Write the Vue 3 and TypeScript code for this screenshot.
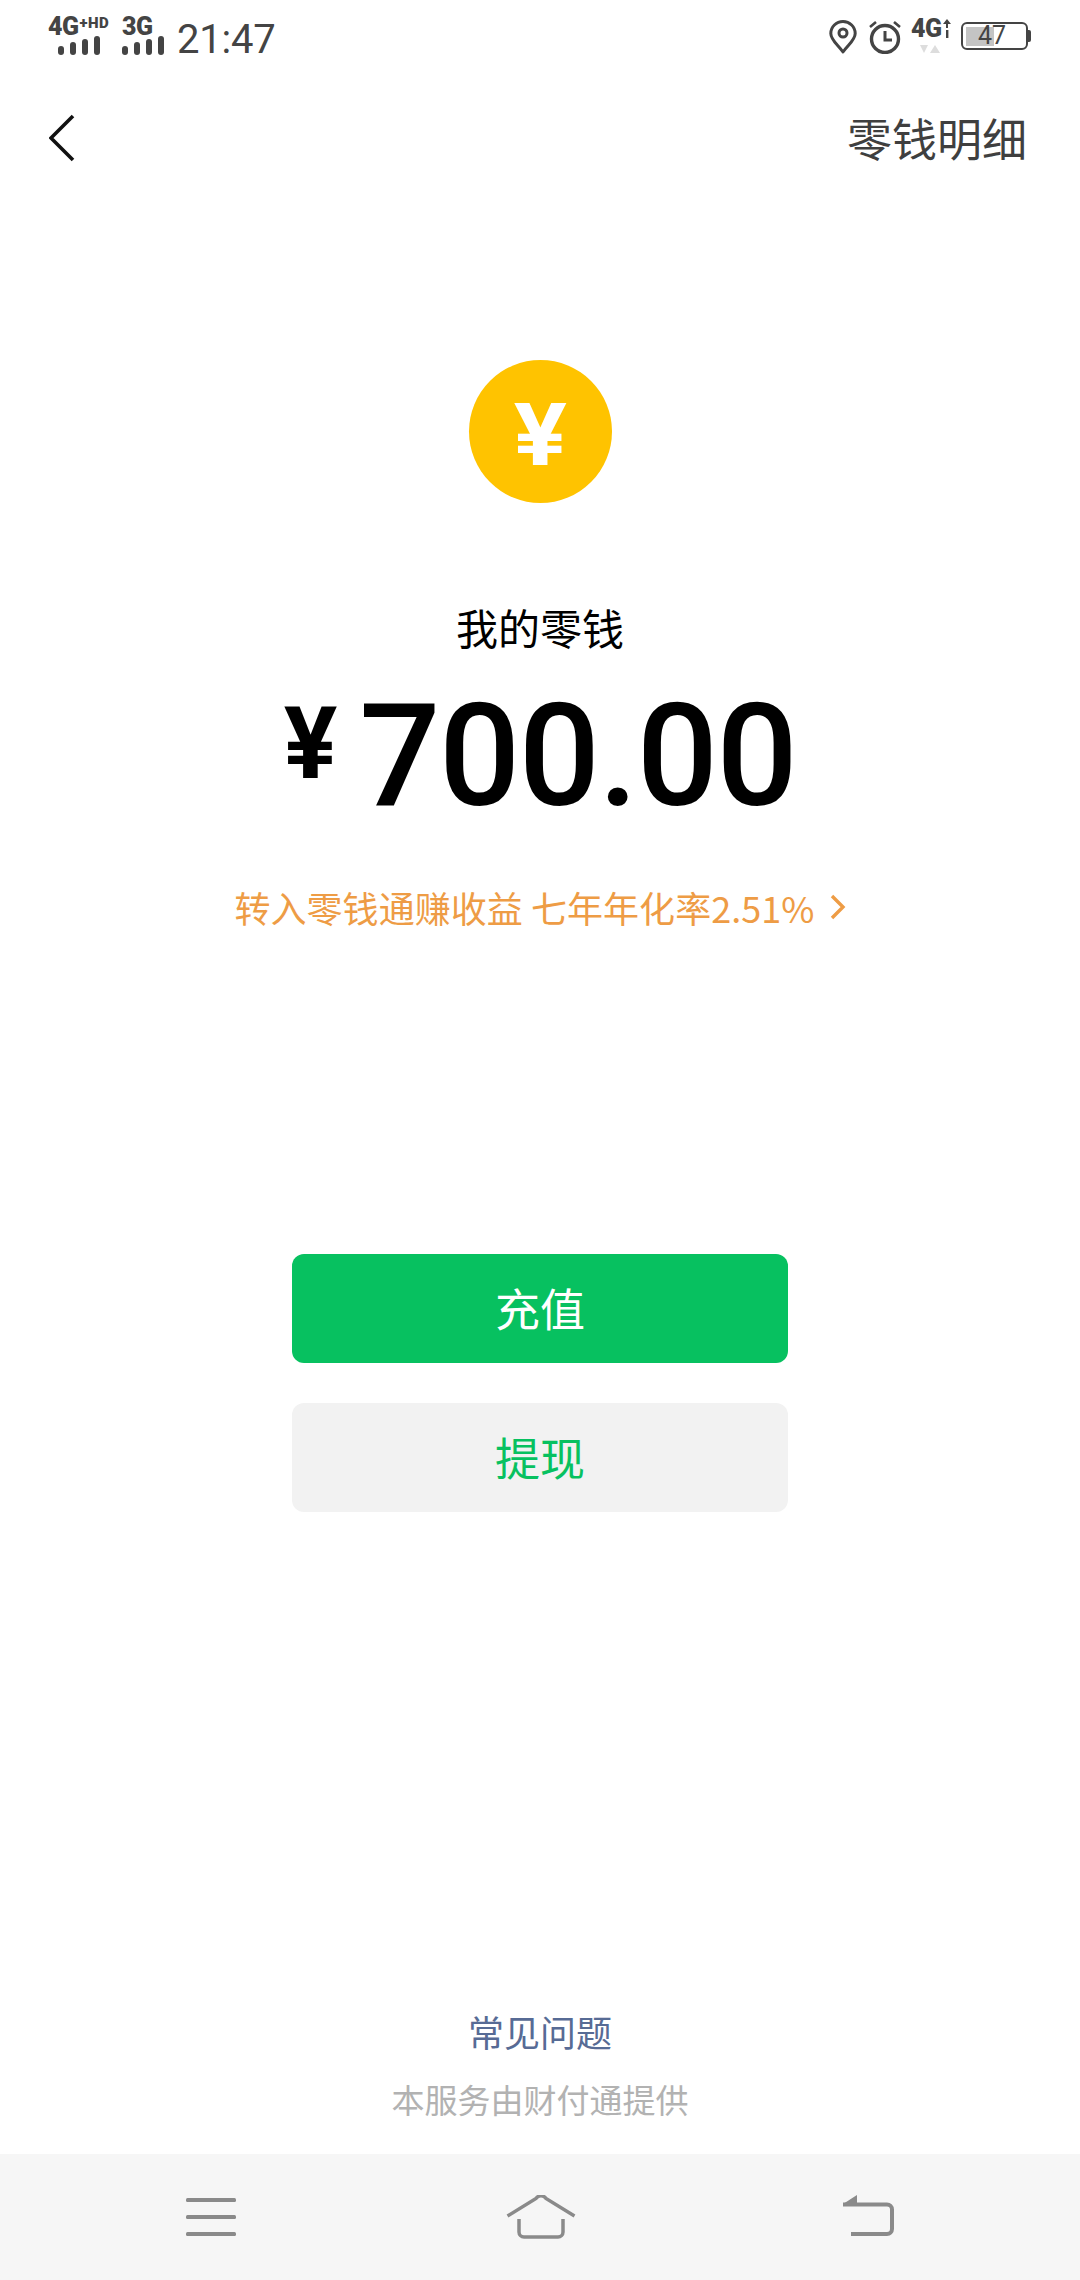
<script setup lang="ts">
const bars = [9, 13, 16, 19]
</script>

<template>
  <div class="page">
    <div class="status">
      <div class="net net-a">
        <div class="net-label"><span class="big">4G</span><span class="sup">+HD</span></div>
        <div class="bars"><i v-for="h in bars" :key="h" :style="{ height: h + 'px' }"></i></div>
      </div>
      <div class="net net-b">
        <div class="net-label"><span class="big">3G</span></div>
        <div class="bars"><i v-for="h in bars" :key="h" :style="{ height: h + 'px' }"></i></div>
      </div>
      <span class="clock">21:47</span>
      <div class="status-right">
        <svg class="pin" width="28" height="34" viewBox="0 0 28 34" fill="none" stroke="#444" stroke-width="3">
          <path d="M14 32 C9 25 1.8 20 1.8 13.5 A12.2 12 0 0 1 26.2 13.5 C26.2 20 19 25 14 32Z" stroke-linejoin="round" />
          <circle cx="14" cy="13" r="4" />
        </svg>
        <svg class="alarm" width="34" height="34" viewBox="0 0 34 34" fill="none" stroke="#444" stroke-width="3.4">
          <circle cx="17" cy="19" r="13.5" />
          <path d="M17 11v9h7" stroke-width="3" />
          <path d="M2 7l6-5M32 7l-6-5" stroke-width="2.6" />
        </svg>
        <div class="net4">
          <div class="net4-label"><span>4G</span>
            <svg width="8" height="19" viewBox="0 0 8 19"><path d="M4 0l4 5H5v4H3V5H0z" fill="#444"/><rect x="3" y="11" width="2.4" height="8" fill="#444"/></svg>
          </div>
          <svg class="updown" width="22" height="10" viewBox="0 0 22 10"><path d="M0 1h8l-4 8zM10 9h10l-5-8z" fill="#ddd"/></svg>
        </div>
        <div class="battery">
          <div class="cell">
            <div class="fill"></div>
            <span class="pct">47</span>
          </div>
          <div class="nub"></div>
        </div>
      </div>
    </div>

    <div class="header">
      <svg width="26" height="48" viewBox="0 0 26 48" fill="none" stroke="#111" stroke-width="3.6">
        <path d="M24 2L2 24l22 22" />
      </svg>
      <span class="detail">零钱明细</span>
    </div>

    <div class="coin"><span class="coin-yen">¥</span></div>
    <div class="caption">我的零钱</div>
    <div class="amount"><span class="yen">¥</span><span class="num">700.00</span></div>
    <div class="promo">
      <span>转入零钱通赚收益 七年年化率2.51%</span>
      <svg width="16" height="26" viewBox="0 0 16 26" fill="none" stroke="#EE9C45" stroke-width="3.4">
        <path d="M2 2l11 11L2 24" />
      </svg>
    </div>

    <div class="btn primary">充值</div>
    <div class="btn secondary">提现</div>

    <div class="faq">常见问题</div>
    <div class="provider">本服务由财付通提供</div>

    <div class="navbar">
      <svg width="50" height="38" viewBox="0 0 50 38" fill="#8a8a8a">
        <rect x="0" y="0" width="50" height="4" rx="1.5" />
        <rect x="0" y="17" width="50" height="4" rx="1.5" />
        <rect x="0" y="34" width="50" height="4" rx="1.5" />
      </svg>
      <svg class="home" width="70" height="44" viewBox="0 0 70 44" fill="none" stroke="#8a8a8a" stroke-width="3.4">
        <path d="M1.500 21L30 3.500a6 6 0 0 1 10 0L68.500 21" />
        <path d="M13 24v13a5 5 0 0 0 5 5h34a5 5 0 0 0 5-5V24" stroke-width="3.500" />
      </svg>
      <svg class="back" width="52" height="42" viewBox="0 0 52 42" fill="none" stroke="#8a8a8a" stroke-width="4">
        <path d="M1 9L15 0v8z" fill="#8a8a8a" stroke="none" />
        <path d="M1 9.500h44a5 5 0 0 1 5 5V34a5 5 0 0 1-5 5H9" />
      </svg>
    </div>
  </div>
</template>

<style scoped>
.page {
  width: 1080px;
  height: 2280px;
  background: #fff;
  display: flex;
  flex-direction: column;
  align-items: center;
  font-family: "Noto Sans CJK SC", Roboto, sans-serif;
  overflow: hidden;
}
.status {
  align-self: stretch;
  height: 72px;
  display: flex;
  align-items: flex-start;
  padding: 17px 48px 0 48px;
  box-sizing: border-box;
  color: #444;
  font-family: Roboto, sans-serif;
}
.net { display: flex; flex-direction: column; }
.net-a { width: 62px; }
.net-b { margin-left: 12px; width: 42px; }
.net-label { height: 19px; display: flex; align-items: flex-start; line-height: 19px; white-space: nowrap; }
.big { font-size: 25px; font-weight: 900; letter-spacing: -0.5px; }
.sup { font-size: 15px; font-weight: 900; line-height: 12px; margin-left: 1px; letter-spacing: 0.4px; }
.bars { display: flex; align-items: flex-end; gap: 6px; height: 19px; justify-content: flex-end; }
.net-a .bars { padding-right: 10px; }
.bars i { display: block; width: 6px; border-radius: 3px; background: #444; height: 100%; }
.clock { margin-left: 13px; font-size: 40px; line-height: 44px; margin-top: 1px; letter-spacing: -0.2px; }
.status-right { margin-left: auto; display: flex; align-items: flex-start; padding-top: 3px; }
.alarm { margin-left: 11px; }
.net4 { margin-left: 9px; width: 42px; display: flex; flex-direction: column; align-items: center; margin-top: -1px; }
.net4-label { display: flex; font-size: 25px; font-weight: 900; line-height: 19px; height: 19px; align-self: flex-start; letter-spacing: -0.5px; }
.net4-label svg { margin-left: 1px; }
.updown { margin-top: 6px; margin-right: 2px; }
.battery { margin-left: 8px; margin-right: 1px; display: flex; align-items: center; margin-top: 2px; }
.cell {
  width: 67px;
  height: 28px;
  box-sizing: border-box;
  border: 2.5px solid #444;
  border-radius: 6px;
  position: relative;
  padding: 2.5px;
}
.fill { width: 28px; height: 100%; background: #c4c4c4; }
.pct {
  position: absolute;
  left: 15px;
  top: 0;
  font-size: 25px;
  line-height: 23px;
  color: #444;
}
.nub { width: 3px; height: 12px; background: #444; border-radius: 0 2px 2px 0; }
.header {
  align-self: stretch;
  height: 72px;
  display: flex;
  align-items: center;
  justify-content: space-between;
  padding: 0 53px 0 49px;
  box-sizing: border-box;
  margin-top: 30px;
}
.detail { font-size: 45px; line-height: 60px; color: #3f3f3f; }
.coin {
  width: 143px;
  height: 143px;
  border-radius: 50%;
  background: #FFC300;
  margin-top: 186px;
  display: flex;
  align-items: center;
  justify-content: center;
  color: #fff;
  font-family: Roboto, sans-serif;
  font-weight: 700;
  font-size: 87px;
  line-height: 143px;
  box-sizing: border-box;
  padding-top: 7px;
}
.coin-yen { display: block; transform: scaleX(1.14); }
.caption {
  margin-top: 99px;
  font-size: 42px;
  line-height: 50px;
  color: #000;
}
.amount {
  margin-top: 39px;
  display: flex;
  align-items: flex-start;
  font-family: Roboto, sans-serif;
  color: #000;
  height: 130px;
  line-height: 130px;
}
.yen { font-size: 100px; font-weight: 700; line-height: 105px; margin-right: 22px; }
.num { font-size: 143px; font-weight: 500; letter-spacing: -1.5px; }
.promo {
  margin-top: 61px;
  display: flex;
  align-items: center;
  gap: 15px;
  color: #EE9C45;
  font-size: 36px;
  line-height: 50px;
  letter-spacing: 0.05px;
}
.btn {
  width: 496px;
  height: 109px;
  border-radius: 12px;
  display: flex;
  align-items: center;
  justify-content: center;
  font-size: 45px;
  box-sizing: border-box;
  padding-bottom: 3px;
}
.primary { background: #07C160; color: #fff; margin-top: 322px; }
.secondary { background: #F2F2F2; color: #07C160; margin-top: 40px; }
.faq { margin-top: auto; font-size: 36px; line-height: 50px; color: #576B95; }
.provider { margin-top: 18px; font-size: 33px; line-height: 50px; color: #B2B2B2; }
.navbar {
  align-self: stretch;
  height: 126px;
  margin-top: 30px;
  background: #F6F6F6;
  display: flex;
  align-items: center;
  box-sizing: border-box;
  padding: 0 186px;
  justify-content: space-between;
}
.home { margin-left: 3px; }
.back { margin-top: -2px; }
</style>
